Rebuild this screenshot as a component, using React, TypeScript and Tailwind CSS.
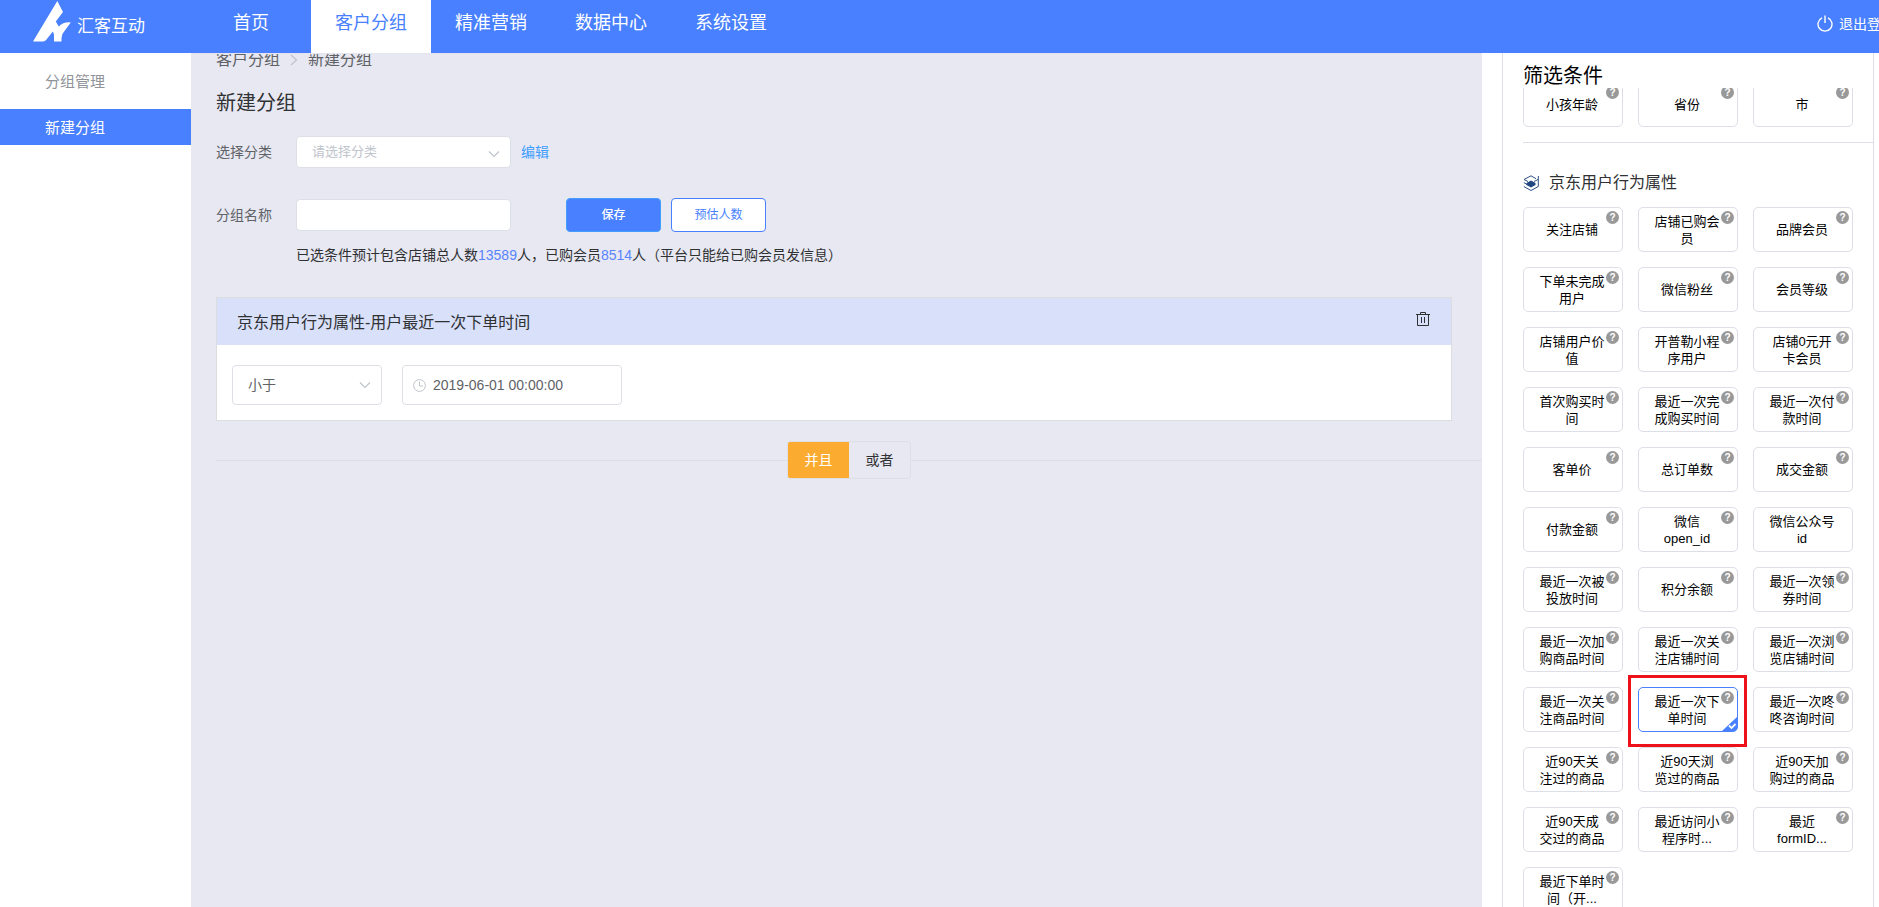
import React from "react";
import clsx from "clsx";

const navItems = ["首页", "客户分组", "精准营销", "数据中心", "系统设置"];
const menuItems = ["分组管理", "新建分组"];

const basicFilters = ["小孩年龄", "省份", "市"];

const behaviorFilters = [
    "关注店铺", "店铺已购会员", "品牌会员",
    "下单未完成用户", "微信粉丝", "会员等级",
    "店铺用户价值", "开普勒小程序用户", "店铺0元开卡会员",
    "首次购买时间", "最近一次完成购买时间", "最近一次付款时间",
    "客单价", "总订单数", "成交金额",
    "付款金额", "微信open_id", "微信公众号id",
    "最近一次被投放时间", "积分余额", "最近一次领券时间",
    "最近一次加购商品时间", "最近一次关注店铺时间", "最近一次浏览店铺时间",
    "最近一次关注商品时间", "最近一次下单时间", "最近一次咚咚咨询时间",
    "近90天关注过的商品", "近90天浏览过的商品", "近90天加购过的商品",
    "近90天成交过的商品", "最近访问小程序时...", "最近 formID...",
    "最近下单时间（开...",
];

// filters that have no help tip
const noHelp = ["微信公众号id"];

function Logo() {
    return (
        <a href="#" className="flex w-[191px] shrink-0 items-start pl-[33px] text-white">
            <svg className="h-[42px] w-[38px]" viewBox="0 0 38 42" fill="#fff" aria-hidden="true">
                <path d="M24.300 1 30 12 22.800 21.500 25.800 26.500Q31 21.500 37.800 22.500L31.500 31Q28.500 34 28.500 38V41.500H21V37Q21.500 34 19.800 31.500L13.500 39.500Q12 41.500 10 41.500H0Z" />
            </svg>
            <span className="ml-[6px] pt-[15px] text-[17px] leading-6">汇客互动</span>
        </a>
    );
}

function Chevron({ className }: { className?: string }) {
    return (
        <svg className={clsx("pointer-events-none h-[8px] w-[12px]", className)} viewBox="0 0 12 8" fill="none" stroke="#c0c4cc" aria-hidden="true">
            <path d="M1 1.500 6 6.500 11 1.500" strokeWidth="1.2" />
        </svg>
    );
}

function FilterButton({ label, active, onClick }: { label: string; active?: boolean; onClick?: () => void }) {
    return (
        <button
            type="button"
            aria-pressed={!!active}
            onClick={onClick}
            className={clsx(
                "relative flex h-[45px] items-center justify-center rounded-[5px] border bg-white pr-[2px] text-[13px] leading-[17px] text-black",
                active ? "border-[#4880ff]" : "border-[#dcdfe6]"
            )}
        >
            <span className="w-[66px]">{label}</span>
            {!noHelp.includes(label) && (
                <span className="absolute right-[3px] top-[3px] flex h-[13px] w-[13px] items-center justify-center rounded-full bg-[#999] text-[10px] font-bold leading-none text-white">
                    ?
                </span>
            )}
            {active && (
                <>
                    <svg className="absolute bottom-0 right-0 h-[14px] w-[15px]" viewBox="0 0 15 14" aria-hidden="true">
                        <path d="M15 0V11Q15 14 12 14H0Z" fill="#4880ff" />
                        <path d="M7 8.500 9.500 11 13.500 7" fill="none" stroke="#fff" strokeWidth="1.8" />
                    </svg>
                    <span className="pointer-events-none absolute -left-[11px] -top-[13px] h-[72px] w-[119px] border-[3px] border-[#ee1119]" />
                </>
            )}
        </button>
    );
}

export default function App() {
    const [selected, setSelected] = React.useState("最近一次下单时间");
    const [relation, setRelation] = React.useState("并且");

    return (
        <div className="flex h-screen w-full flex-col overflow-hidden bg-white font-['Liberation_Sans','Noto_Sans_CJK_SC',sans-serif] text-[#303133]">
            <header className="flex h-[53px] shrink-0 items-stretch overflow-hidden bg-[#4880ff]">
                <Logo />
                <nav className="flex">
                    {navItems.map((item) => (
                        <a
                            key={item}
                            href="#"
                            className={clsx(
                                "flex w-[120px] items-center justify-center pb-[7px] text-lg",
                                item === "客户分组" ? "bg-white text-[#4880ff]" : "text-white"
                            )}
                        >
                            {item}
                        </a>
                    ))}
                </nav>
                <a href="#" className="-mr-4 ml-auto flex shrink-0 items-center gap-[6px] pb-[6px] text-sm text-white">
                    <svg className="h-[17px] w-4" viewBox="0 0 16 17" fill="none" stroke="#fff" strokeWidth="1.4" aria-hidden="true">
                        <path d="M8 0.500V8M5 2.800A7 7 0 1 0 11 2.800" />
                    </svg>
                    退出登录
                </a>
            </header>

            <div className="flex min-h-0 flex-1">
                <aside className="flex w-[191px] shrink-0 flex-col gap-[10px] pt-[10px]">
                    {menuItems.map((item) => (
                        <a
                            key={item}
                            href="#"
                            className={clsx(
                                "flex h-9 items-center pl-[45px] pt-[2px] text-[15px]",
                                item === "新建分组" ? "bg-[#4880ff] text-white" : "text-[#909399]"
                            )}
                        >
                            {item}
                        </a>
                    ))}
                </aside>

                <main className="min-w-0 flex-1 overflow-hidden border-t border-[#e4e4ee] bg-[#e7e8f2] pl-[25px]">
                    <div className="-mt-[6px] flex h-6 items-center text-base text-[#606266]">
                        <a href="#">客户分组</a>
                        <svg className="mx-[10px] h-3 w-2" viewBox="0 0 8 12" fill="none" stroke="#c0c4cc" strokeWidth="1.3" aria-hidden="true">
                            <path d="M1 1 6.500 6 1 11" />
                        </svg>
                        <span>新建分组</span>
                    </div>
                    <h1 className="mt-[17px] text-xl leading-7">新建分组</h1>

                    <div className="mt-[19px] flex h-8 items-center text-sm">
                        <label htmlFor="category" className="w-20 text-[#606266]">选择分类</label>
                        <div className="relative">
                            <select
                                id="category"
                                defaultValue=""
                                className="h-8 w-[215px] appearance-none rounded border border-[#dcdfe6] bg-white pl-[15px] pr-8 text-[13px] text-[#c0c4cc]"
                            >
                                <option value="">请选择分类</option>
                            </select>
                            <Chevron className="absolute right-[11px] top-[14px]" />
                        </div>
                        <a href="#" className="ml-[10px] text-[#409eff]">编辑</a>
                    </div>

                    <div className="mt-[30px] flex h-[34px] items-center text-sm">
                        <label htmlFor="group-name" className="w-20 text-[#606266]">分组名称</label>
                        <input id="group-name" type="text" className="h-8 w-[215px] rounded border border-[#dcdfe6] bg-white px-[15px] text-[13px]" />
                        <button type="button" className="ml-[55px] h-[34px] w-[95px] rounded border border-[#409eff] bg-[#4880ff] text-xs font-medium text-white">
                            保存
                        </button>
                        <button type="button" className="ml-[10px] h-[34px] w-[95px] rounded border border-[#4880ff] bg-white text-xs text-[#4880ff]">
                            预估人数
                        </button>
                    </div>

                    <p className="mt-3 pl-20 text-sm leading-[22px]">
                        已选条件预计包含店铺总人数<span className="text-[#5a84ff]">13589</span>人，已购会员<span className="text-[#5a84ff]">8514</span>人（平台只能给已购会员发信息）
                    </p>

                    <section className="mr-[30px] mt-[31px] border border-[#dcdddf] bg-white">
                        <div className="flex h-[47px] items-center justify-between bg-[#d8e0fa] pl-5 pr-[21px]">
                            <h2 className="pt-[3px] text-base">京东用户行为属性-用户最近一次下单时间</h2>
                            <button type="button" aria-label="删除" className="pb-[5px]">
                                <svg className="h-[14px] w-[14px]" viewBox="0 0 14 14" fill="none" stroke="#303133" aria-hidden="true">
                                    <path d="M0 2.500H14M4.500 2.500V0.500H9.500V2.500M1.500 2.500V13.500H12.500V2.500M5.500 5V11M8.500 5V11" />
                                </svg>
                            </button>
                        </div>
                        <div className="flex gap-5 px-[15px] pb-[15px] pt-5 text-sm text-[#606266]">
                            <div className="relative">
                                <select aria-label="比较方式" className="h-10 w-[150px] appearance-none rounded border border-[#dcdfe6] bg-white px-[15px]">
                                    <option>小于</option>
                                </select>
                                <Chevron className="absolute right-[11px] top-4" />
                            </div>
                            <label className="flex h-10 w-[220px] items-center gap-[7px] rounded border border-[#dcdfe6] px-[10px]">
                                <svg className="h-[13px] w-[13px] shrink-0" viewBox="0 0 13 13" fill="none" stroke="#c0c4cc" aria-hidden="true">
                                    <circle cx="6.5" cy="6.500" r="5.900" />
                                    <path d="M6.500 2.500V7H10" />
                                </svg>
                                <input type="text" aria-label="时间" defaultValue="2019-06-01 00:00:00" className="w-full min-w-0 outline-none" />
                            </label>
                        </div>
                    </section>

                    <div className="mt-5 flex items-center">
                        <div className="h-px flex-1 bg-[#dcdfe6]" />
                        <div className="flex overflow-hidden rounded-[3px] border border-[#dcdfe6]">
                            {["并且", "或者"].map((item) => (
                                <button
                                    key={item}
                                    type="button"
                                    aria-pressed={relation === item}
                                    onClick={() => setRelation(item)}
                                    className={clsx("h-9 w-[61px] text-sm", relation === item && "bg-[#fbab30] text-white")}
                                >
                                    {item}
                                </button>
                            ))}
                        </div>
                        <div className="h-px flex-1 bg-[#dcdfe6]" />
                    </div>
                </main>

                <aside className="flex w-[397px] shrink-0 pl-5 pr-[5px]">
                    <div className="flex w-full flex-col border-x border-[#dcdfe6] pl-5">
                        <h2 className="h-[35px] shrink-0 pt-2 text-xl leading-[30px] text-black">筛选条件</h2>
                        <div className="min-h-0 flex-1 overflow-hidden">
                            <div className="-mt-[6px] grid grid-cols-3 gap-[15px] border-b border-[#dcdfe6] pb-[15px] pr-5">
                                {basicFilters.map((label) => (
                                    <FilterButton key={label} label={label} />
                                ))}
                            </div>
                            <h3 className="mt-7 flex h-6 items-center gap-[10px] text-base">
                                <svg className="h-4 w-4" viewBox="0 0 16 16" fill="none" stroke="#2c4f80" aria-hidden="true">
                                    <path d="M1 4.500 8 0.800 13 3.700M15.300 1V11.500L8 15.500 0.800 11.500M1 4.500 5 6.500M15 4.500 11 6.500M0.800 7.500 4 9.500" />
                                    <path d="M8 5.500 12.500 8V10L8 12.500 3.500 10V8Z" fill="#1f4680" stroke="none" />
                                </svg>
                                京东用户行为属性
                            </h3>
                            <div className="mt-3 grid grid-cols-3 gap-[15px] pr-5">
                                {behaviorFilters.map((label) => (
                                    <FilterButton
                                        key={label}
                                        label={label}
                                        active={label === selected}
                                        onClick={() => setSelected(label)}
                                    />
                                ))}
                            </div>
                        </div>
                    </div>
                </aside>
            </div>
        </div>
    );
}
